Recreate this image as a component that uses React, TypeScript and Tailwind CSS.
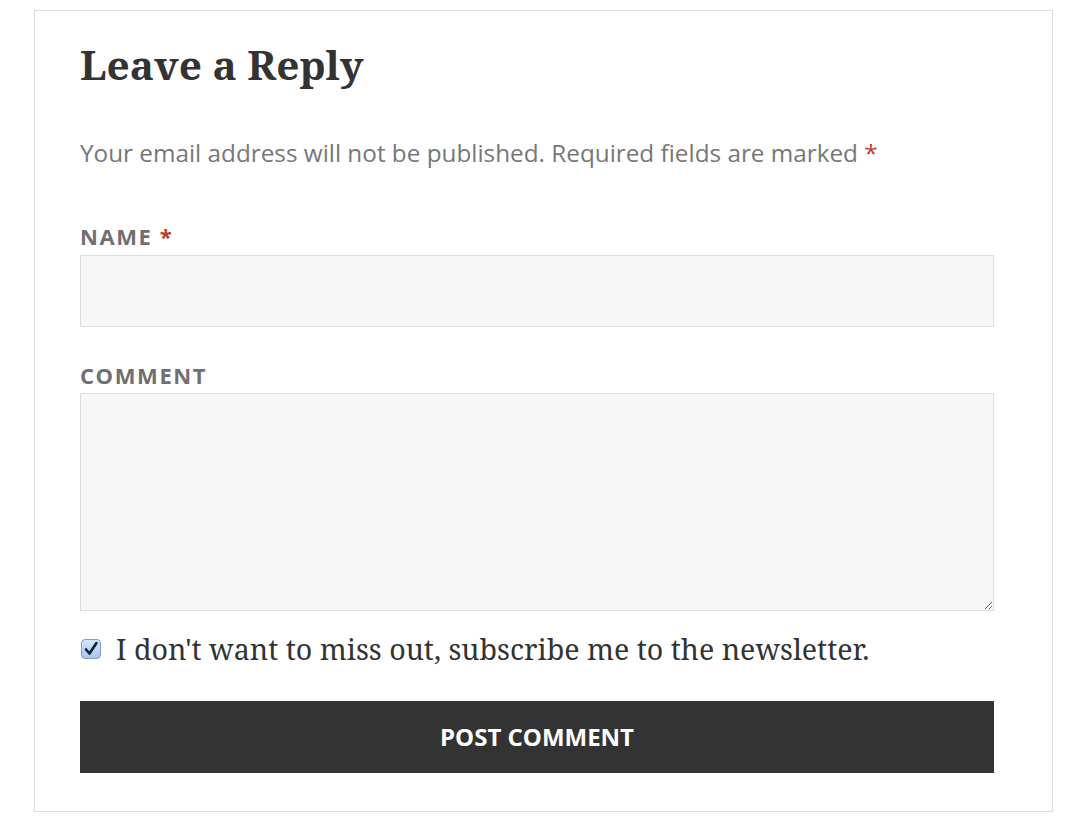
export default function App() {
  return (
    <div className="min-h-screen bg-white pt-[10px]">
      <div className="ml-[34px] w-[1019px] h-[802px] border border-[#dcdcdc] pl-[45px] pr-[58px] pt-[29px]">
        <h2 className="font-['Noto_Serif','DejaVu_Serif',serif] font-bold text-[40.6px] leading-[50px] text-[#333]">
          Leave a Reply
        </h2>
        <p className="mt-[47px] font-['Open_Sans',sans-serif] text-[24.3px] leading-[32px] text-[#777]">
          Your email address will not be published. Required fields are marked{" "}
          <span className="text-[#c0392b]">*</span>
        </p>
        <label className="block mt-[52px] font-['Open_Sans',sans-serif] font-bold text-[22px] leading-[30px] tracking-[1.6px] uppercase text-[#707070]">
          Name <span className="text-[#c0392b]">*</span>
        </label>
        <input
          type="text"
          className="block mt-[4px] w-full h-[72px] bg-[#f7f7f7] border border-[#dedede] outline-none"
        />
        <label className="block mt-[33px] font-['Open_Sans',sans-serif] font-bold text-[22px] leading-[30px] tracking-[1.6px] uppercase text-[#707070]">
          Comment
        </label>
        <textarea className="block mt-[3px] w-full h-[218px] bg-[#f7f7f7] border border-[#dedede] outline-none resize-y" />
        <label className="mt-[18px] flex items-center gap-[15px] h-[40px]">
          <span className="ml-[1px] w-[20px] h-[20px] rounded-[4px] border border-[#7f9fc4] bg-gradient-to-b from-[#d7e6f7] to-[#a9c6e8] flex items-center justify-center">
            <svg width="16" height="16" viewBox="0 0 16 16">
              <path
                d="M3 8.5 L6.5 12.5 L13.5 2"
                fill="none"
                stroke="#0d1f3c"
                strokeWidth="2.6"
                strokeLinecap="round"
                strokeLinejoin="round"
              />
            </svg>
          </span>
          <span className="font-['Noto_Serif','DejaVu_Serif',serif] text-[28.6px] text-[#333]">
            I don't want to miss out, subscribe me to the newsletter.
          </span>
        </label>
        <button className="mt-[32px] w-full h-[72px] bg-[#333] text-white font-['Open_Sans',sans-serif] font-bold text-[24px] uppercase">
          Post Comment
        </button>
      </div>
    </div>
  );
}
